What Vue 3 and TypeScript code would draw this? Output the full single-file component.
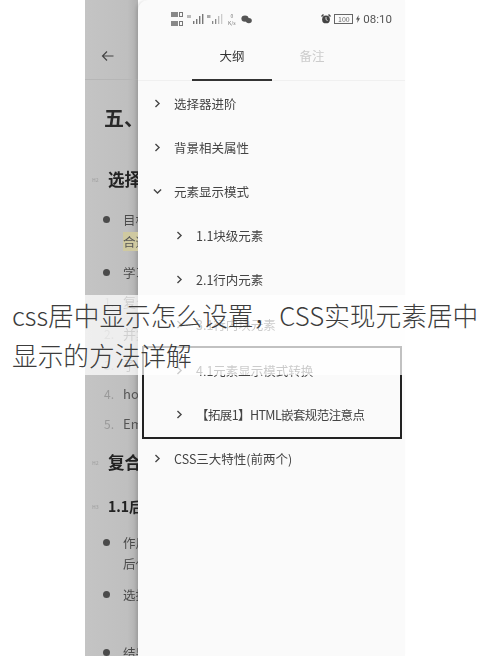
<script setup lang="ts">
interface PageLine {
  kind: string
  text: string
  top: number
  mark?: string
}
interface OutlineRow {
  text: string
  open?: boolean
  sub?: boolean
  tight?: boolean
}

const pageLines: PageLine[] = [
  { kind: 'h1', text: '五、选择器', top: 23 },
  { kind: 'h2', text: '选择器进阶', top: 36, mark: 'H2' },
  { kind: 'item', text: '目标明确', top: 18 },
  { kind: 'hl', text: '合适', top: 1 },
  { kind: 'item', text: '学习内容', top: 10 },
  { kind: 'num', text: '复合', mark: '1.', top: 8 },
  { kind: 'num', text: '并集', mark: '2.', top: 11 },
  { kind: 'num', text: '子代', mark: '3.', top: 10 },
  { kind: 'num', text: 'how', mark: '4.', top: 8 },
  { kind: 'num', text: 'Emmet', mark: '5.', top: 9 },
  { kind: 'h2', text: '复合选择器', top: 16, mark: 'H2' },
  { kind: 'h3', text: '1.1后代选择器', top: 20, mark: 'H3' },
  { kind: 'item', text: '作用', top: 14 },
  { kind: 'cont', text: '后代', top: 0 },
  { kind: 'item', text: '选择', top: 10 },
  { kind: 'item', text: '结果', top: 37 },
]

const rowsBefore: OutlineRow[] = [
  { text: '选择器进阶' },
  { text: '背景相关属性' },
  { text: '元素显示模式', open: true },
  { text: '1.1块级元素', sub: true },
  { text: '2.1行内元素', sub: true },
  { text: '3.1行内块元素', sub: true },
]
const rowsBoxed: OutlineRow[] = [
  { text: '4.1元素显示模式转换', sub: true },
  { text: '【拓展1】HTML嵌套规范注意点', sub: true, tight: true },
]
const rowsAfter: OutlineRow[] = [{ text: 'CSS三大特性(前两个)' }]
</script>

<template>
  <div class="screen">
    <div class="phone">
      <section class="page">
        <header class="page-head">
          <svg class="back" width="14" height="12" viewBox="0 0 14 12" fill="none" stroke="#444" stroke-width="1.2">
            <path d="M12.5 6H1.5M6 1.5 1.5 6 6 10.5" />
          </svg>
        </header>
        <div
          v-for="line in pageLines"
          :key="line.text"
          class="line"
          :class="line.kind"
          :style="{ marginTop: line.top + 'px' }"
        >
          <span v-if="line.kind === 'item'" class="bullet"></span>
          <span v-else-if="line.mark" class="mark">{{ line.mark }}</span>
          <span class="line-text">{{ line.text }}</span>
        </div>
      </section>

      <aside class="drawer">
        <div class="status">
          <div class="sims">
            <div class="sim"><i></i><b></b></div>
            <div class="sim"><i></i><b></b></div>
          </div>
          <svg class="signal" width="20" height="12" viewBox="0 0 20 12" fill="#777">
            <rect x="7" y="8" width="1.4" height="3" />
            <rect x="10" y="6" width="1.4" height="5" />
            <rect x="13" y="3" width="1.4" height="8" />
            <rect x="16" y="1" width="1.4" height="10" />
            <rect x="1" y="2" width="4" height="3" fill="#bbb" />
          </svg>
          <svg class="signal two" width="18" height="12" viewBox="0 0 18 12" fill="#888">
            <rect x="6" y="8" width="1.3" height="3" />
            <rect x="9" y="6" width="1.3" height="5" />
            <rect x="12" y="3" width="1.3" height="8" fill="#bbb" />
            <rect x="15" y="1" width="1.3" height="10" fill="#ccc" />
            <rect x="1" y="2" width="3.5" height="3" fill="#aaa" />
          </svg>
          <div class="speed"><span>0</span><span>K/s</span></div>
          <svg class="chat" width="11" height="9" viewBox="0 0 11 9" fill="#555">
            <ellipse cx="4" cy="3.6" rx="3.6" ry="3.2" />
            <ellipse cx="7.8" cy="5.6" rx="3" ry="2.6" />
          </svg>
          <div class="status-right">
            <svg width="10" height="10" viewBox="0 0 10 10" fill="#444">
              <circle cx="5" cy="5.4" r="3.9" />
              <path d="M0 2 2 0l1 1-2 2ZM10 2 8 0 7 1l2 2Z" />
              <path d="M5 3v2.6l1.6 1" stroke="#fff" stroke-width=".8" fill="none" />
            </svg>
            <span class="battery">100</span>
            <svg width="4" height="8" viewBox="0 0 4 8" fill="#555"><path d="M2.6 0 0 4.6h1.6L1.2 8 4 3.2H2.3Z" /></svg>
            <span class="time">08:10</span>
          </div>
        </div>

        <nav class="tabs">
          <span class="tab active">大纲</span>
          <span class="tab muted">备注</span>
        </nav>

        <ul class="outline">
          <li v-for="row in rowsBefore" :key="row.text" class="row" :class="{ sub: row.sub }">
            <svg class="chev" width="9" height="9" viewBox="0 0 8 8" fill="none" stroke="#444" stroke-width="1.2">
              <path :d="row.open ? 'M.8 2.2 4 5.4l3.2-3.2' : 'M2.2.8 5.4 4 2.2 7.2'" />
            </svg>
            <span>{{ row.text }}</span>
          </li>
          <li class="boxed">
            <ul class="boxed-list">
              <li v-for="row in rowsBoxed" :key="row.text" class="row sub">
                <svg class="chev" width="9" height="9" viewBox="0 0 8 8" fill="none" stroke="#444" stroke-width="1.2">
                  <path d="M2.2.8 5.4 4 2.2 7.2" />
                </svg>
                <span :class="{ tight: row.tight }">{{ row.text }}</span>
              </li>
            </ul>
          </li>
          <li v-for="row in rowsAfter" :key="row.text" class="row">
            <svg class="chev" width="9" height="9" viewBox="0 0 8 8" fill="none" stroke="#444" stroke-width="1.2">
              <path d="M2.2.8 5.4 4 2.2 7.2" />
            </svg>
            <span>{{ row.text }}</span>
          </li>
        </ul>
      </aside>
    </div>

    <h1 class="caption">css居中显示怎么设置，CSS实现元素居中显示的方法详解</h1>
  </div>
</template>

<style scoped>
.screen {
  position: relative;
  width: 490px;
  height: 656px;
  overflow: hidden;
  background: #fff;
  font-family: "Noto Sans CJK SC", "Noto Sans", sans-serif;
  color: #333;
}
.phone {
  display: flex;
  width: 320px;
  height: 656px;
  margin-left: 85px;
  filter: blur(0.35px);
}
.page {
  width: 53px;
  flex: none;
  overflow: hidden;
  background: linear-gradient(90deg, #c4c4c4 0, #bfbfbf 80%, #b0b0b0 100%);
}
.page-head {
  display: flex;
  align-items: center;
  height: 80px;
  padding: 32px 0 0 16px;
  box-sizing: border-box;
  border-bottom: 1px solid #b6b6b6;
}
.line {
  display: flex;
  align-items: center;
  width: 220px;
  height: 21px;
  padding-left: 38px;
  box-sizing: border-box;
  white-space: nowrap;
  font-size: 12.5px;
  color: #4a4a4a;
  position: relative;
}
.line-text {
  flex: none;
}
.bullet {
  position: absolute;
  left: 18px;
  top: 7px;
  width: 7px;
  height: 7px;
  border-radius: 50%;
  background: #4b4b4b;
}
.mark {
  position: absolute;
  left: 19px;
  font-size: 12px;
  color: #999;
}
.h1 {
  padding-left: 19px;
  font-size: 20px;
  font-weight: 700;
  color: #2a2a2a;
  height: 28px;
}
.h2,
.h3 {
  padding-left: 23px;
  font-size: 16.5px;
  font-weight: 700;
  color: #222;
  height: 24px;
}
.h3 {
  font-size: 14px;
}
.h2 .mark,
.h3 .mark {
  left: 7px;
  font-size: 5px;
  color: #a8a8a8;
}
.hl .line-text {
  background: #cfc9a0;
  color: #555;
}
.num .line-text {
  color: #555;
}
.num {
  font-size: 13px;
}
.drawer {
  flex: 1;
  min-width: 0;
  background: #fafafa;
  border-top-left-radius: 10px;
  box-shadow: -2px 0 3px rgba(0, 0, 0, 0.1);
}
.status {
  display: flex;
  align-items: center;
  height: 38px;
  padding: 0 13px 0 33px;
  box-sizing: border-box;
}
.sims {
  display: flex;
  flex-direction: column;
  gap: 4px;
}
.sim {
  display: flex;
  gap: 1px;
}
.sim i {
  width: 7px;
  height: 5px;
  background: #888;
}
.sim b {
  width: 4px;
  height: 5px;
  border: 1px solid #777;
  box-sizing: border-box;
}
.signal {
  margin-left: 3px;
}
.signal.two {
  margin-left: 0;
}
.speed {
  display: flex;
  flex-direction: column;
  align-items: center;
  margin-left: 4px;
  font-size: 5px;
  line-height: 7px;
  color: #777;
}
.chat {
  margin-left: 5px;
}
.status-right {
  display: flex;
  align-items: center;
  gap: 3px;
  margin-left: auto;
}
.battery {
  width: 17px;
  height: 8px;
  border: 1px solid #666;
  font-size: 7px;
  line-height: 8px;
  text-align: center;
  color: #666;
}
.time {
  font-size: 11.5px;
  font-family: "Roboto", sans-serif;
  color: #555;
}
.tabs {
  display: flex;
  height: 43px;
  padding-left: 54px;
  border-bottom: 1px solid #f0f0f0;
  box-sizing: border-box;
}
.tab {
  position: relative;
  width: 80px;
  text-align: center;
  padding-top: 8px;
  font-size: 12.5px;
  line-height: 20px;
}
.tab.active::after {
  content: "";
  position: absolute;
  left: 0;
  right: 0;
  bottom: -1px;
  height: 2.5px;
  background: #333;
}
.tab.muted {
  color: #ccc;
}
.outline,
.boxed-list {
  list-style: none;
  margin: 0;
  padding: 0;
}
.row {
  display: flex;
  align-items: center;
  height: 44.2px;
  padding-left: 15px;
  font-size: 12.5px;
  color: #444;
}
.row .chev {
  flex: none;
  margin-right: 12px;
}
.row.sub {
  padding-left: 37px;
}
.boxed {
  margin: 0 3px -3px 4px;
  height: 93px;
  border: 2px solid #222;
  box-sizing: border-box;
}
.boxed .row.sub {
  padding-left: 31px;
}
.tight {
  letter-spacing: -0.6px;
  white-space: nowrap;
}
.caption {
  position: absolute;
  left: 0;
  top: 295px;
  width: 100%;
  height: 80px;
  margin: 0;
  padding: 0 8px 0 12px;
  box-sizing: border-box;
  background: rgba(255, 255, 255, 0.72);
  font-size: 25.7px;
  font-weight: 300;
  line-height: 40px;
  color: #3c3c3c;
}
</style>
